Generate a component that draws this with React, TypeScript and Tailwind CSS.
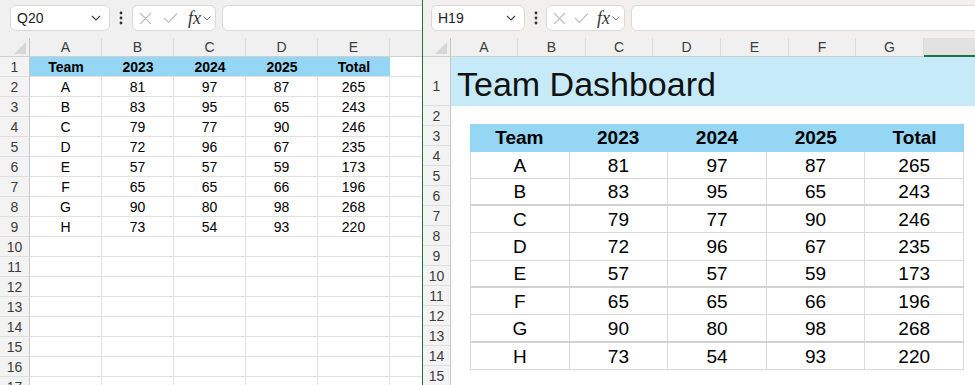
import React from "react";

const leftData = [
  ["Team", "2023", "2024", "2025", "Total"],
  ["A", "81", "97", "87", "265"],
  ["B", "83", "95", "65", "243"],
  ["C", "79", "77", "90", "246"],
  ["D", "72", "96", "67", "235"],
  ["E", "57", "57", "59", "173"],
  ["F", "65", "65", "66", "196"],
  ["G", "90", "80", "98", "268"],
  ["H", "73", "54", "93", "220"],
];

function Chevron({ className }: { className?: string }) {
  return (
    <svg width="10" height="6" viewBox="0 0 10 6" className={className}>
      <path d="M1 1 L5 5 L9 1" fill="none" stroke="#444" strokeWidth="1.2" />
    </svg>
  );
}

function Dots() {
  return (
    <svg width="4" height="14" viewBox="0 0 4 14">
      <circle cx="2" cy="2" r="1.4" fill="#333" />
      <circle cx="2" cy="7" r="1.4" fill="#333" />
      <circle cx="2" cy="12" r="1.4" fill="#333" />
    </svg>
  );
}

function Toolbar({
  name,
  bg,
  padLeft,
  nameW,
  dotsW,
  fxW,
}: {
  name: string;
  bg: string;
  padLeft: string;
  nameW: string;
  dotsW: string;
  fxW: string;
}) {
  return (
    <div className={`h-[38px] shrink-0 flex items-start pt-[5px] ${bg} ${padLeft}`}>
      <div
        className={`h-[26px] ${nameW} shrink-0 bg-white rounded-[6px] border border-[#d9d9d9] flex items-center justify-between pl-[6px] pr-[8px]`}
      >
        <span className="text-[14px] text-[#222]">{name}</span>
        <Chevron />
      </div>
      <div className={`h-[26px] ${dotsW} shrink-0 flex items-center justify-center`}>
        <Dots />
      </div>
      <div
        className={`h-[26px] ${fxW} shrink-0 bg-white rounded-[6px] border border-[#d9d9d9] flex items-center justify-between pl-[6px] pr-[4px]`}
      >
        <svg width="13" height="13" viewBox="0 0 13 13">
          <path d="M1 1 L12 12 M12 1 L1 12" stroke="#bdbdbd" strokeWidth="1.1" fill="none" />
        </svg>
        <svg width="15" height="12" viewBox="0 0 15 12">
          <path d="M1 6 L5.5 10.5 L14 1.5" stroke="#bdbdbd" strokeWidth="1.1" fill="none" />
        </svg>
        <div className="flex items-center gap-[2px]">
          <span className="font-['Liberation_Serif',serif] italic text-[18px] text-[#333] leading-none">
            fx
          </span>
          <svg width="8" height="5" viewBox="0 0 8 5">
            <path d="M0.5 0.5 L4 4 L7.5 0.5" fill="none" stroke="#777" strokeWidth="1" />
          </svg>
        </div>
      </div>
      <div className="ml-[6px] h-[26px] flex-1 bg-white rounded-[6px] border border-[#d9d9d9] -mr-[6px]" />
    </div>
  );
}

function Corner({ w }: { w: string }) {
  return (
    <div className={`${w} shrink-0 h-full border-r border-[#c6c6c6] flex items-end justify-end pr-[3px] pb-[2px]`}>
      <svg width="12" height="12" viewBox="0 0 12 12">
        <polygon points="12,0 12,12 0,12" fill="#d7d7d7" />
      </svg>
    </div>
  );
}

function LeftPane() {
  const colLetters = ["A", "B", "C", "D", "E"];
  const rows = Array.from({ length: 17 }, (_, i) => i + 1);
  return (
    <div className="w-[422px] shrink-0 flex flex-col overflow-hidden bg-white">
      <Toolbar
        name="Q20"
        bg="bg-[#f0f0f0]"
        padLeft="pl-[10px]"
        nameW="w-[100px]"
        dotsW="w-[22px]"
        fxW="w-[84px]"
      />
      <div className="h-[19px] shrink-0 flex bg-[#f0f0f0] border-b border-[#cfcfcf]">
        <Corner w="w-[30px]" />
        {colLetters.map((c) => (
          <div
            key={c}
            className="w-[72px] shrink-0 border-r border-[#dadada] flex items-center justify-center text-[14px] text-[#3c3c3c]"
          >
            {c}
          </div>
        ))}
        <div className="flex-1" />
      </div>
      {rows.map((r) => {
        const d = leftData[r - 1];
        const isHead = r === 1;
        return (
          <div key={r} className="h-[20px] shrink-0 flex">
            <div className="w-[30px] shrink-0 bg-[#f3f3f3] border-r border-[#c6c6c6] border-b border-b-[#dedede] flex items-center justify-center pt-[1px] text-[14px] text-[#3c3c3c]">
              {r}
            </div>
            {[0, 1, 2, 3, 4].map((ci) => (
              <div
                key={ci}
                className={
                  isHead
                    ? "w-[72px] shrink-0 bg-[#94d6f3] border-b border-[#e1e1e1] flex items-center justify-center pt-[2px] text-[14px] font-bold text-black"
                    : "w-[72px] shrink-0 border-r border-b border-[#e1e1e1] flex items-center justify-center pt-[2px] text-[14px] text-black"
                }
              >
                {d ? d[ci] : ""}
              </div>
            ))}
            <div className="flex-1 border-b border-[#e1e1e1]" />
          </div>
        );
      })}
    </div>
  );
}

function RightPane() {
  const letters: [string, string][] = [
    ["A", "w-[67px]"],
    ["B", "w-[68px]"],
    ["C", "w-[67px]"],
    ["D", "w-[68px]"],
    ["E", "w-[68px]"],
    ["F", "w-[67px]"],
    ["G", "w-[68px]"],
  ];
  const rows = Array.from({ length: 14 }, (_, i) => i + 2);
  const rowH = ["h-[27px]", "h-[27px]", "h-[27px]", "h-[28px]", "h-[27px]", "h-[27px]", "h-[28px]", "h-[27px]"];
  const thick = [false, true, false, false, true, false, true, false];
  return (
    <div className="flex-1 flex flex-col overflow-hidden bg-white">
      <Toolbar
        name="H19"
        bg="bg-[#f2efee]"
        padLeft="pl-[8px]"
        nameW="w-[94px]"
        dotsW="w-[21px]"
        fxW="w-[79px]"
      />
      <div className="relative flex-1">
        <div className="h-[19px] flex bg-[#f0f0f0] border-b border-[#cfcfcf]">
          <Corner w="w-[28px]" />
          {letters.map(([c, w]) => (
            <div
              key={c}
              className={`${w} shrink-0 border-r border-[#dadada] flex items-center justify-center text-[14px] text-[#3c3c3c]`}
            >
              {c}
            </div>
          ))}
          <div className="flex-1 bg-[#e2e2e2] border-b-2 border-[#217346] -mb-px" />
        </div>
        <div className="h-[49px] flex">
          <div className="w-[28px] shrink-0 bg-[#f3f3f3] border-r border-[#c6c6c6] border-b border-b-[#dedede] flex items-end justify-center pb-[8px] text-[14px] text-[#3c3c3c]">
            1
          </div>
          <div className="flex-1 bg-[#c7eaf8] flex items-end pl-[6px] pb-[5px]">
            <span className="text-[34px] leading-[34px] text-[#111]">Team Dashboard</span>
          </div>
        </div>
        {rows.map((r) => (
          <div key={r} className="h-[20px] flex">
            <div className="w-[28px] shrink-0 bg-[#f3f3f3] border-r border-[#c6c6c6] border-b border-b-[#dedede] flex items-center justify-center pt-[1px] text-[14px] text-[#3c3c3c]">
              {r}
            </div>
            <div className="flex-1" />
          </div>
        ))}
        <div className="absolute left-[47px] top-[86px] w-[494px] bg-white">
          <div className="h-[28px] flex bg-[#94d6f3]">
            {leftData[0].map((h, i) => (
              <div key={i} className="flex-1 flex items-center justify-center text-[19px] font-bold text-black">
                {h}
              </div>
            ))}
          </div>
          {leftData.slice(1).map((row, ri) => (
            <div
              key={ri}
              className={`${rowH[ri]} flex border-l border-r border-[#dadada] ${
                thick[ri] ? "border-b-2 border-b-[#d2d2d2]" : "border-b border-b-[#dadada]"
              }`}
            >
              {row.map((v, ci) => (
                <div
                  key={ci}
                  className={`flex-1 flex items-center justify-center pt-[2px] text-[19px] text-black ${
                    ci < 4 ? "border-r border-[#dadada]" : ""
                  }`}
                >
                  {v}
                </div>
              ))}
            </div>
          ))}
        </div>
      </div>
    </div>
  );
}

export default function App() {
  return (
    <div className="w-[975px] h-[385px] overflow-hidden flex bg-white font-['Liberation_Sans',Arial,sans-serif]">
      <LeftPane />
      <div className="w-px shrink-0 bg-[#217346]" />
      <RightPane />
    </div>
  );
}
